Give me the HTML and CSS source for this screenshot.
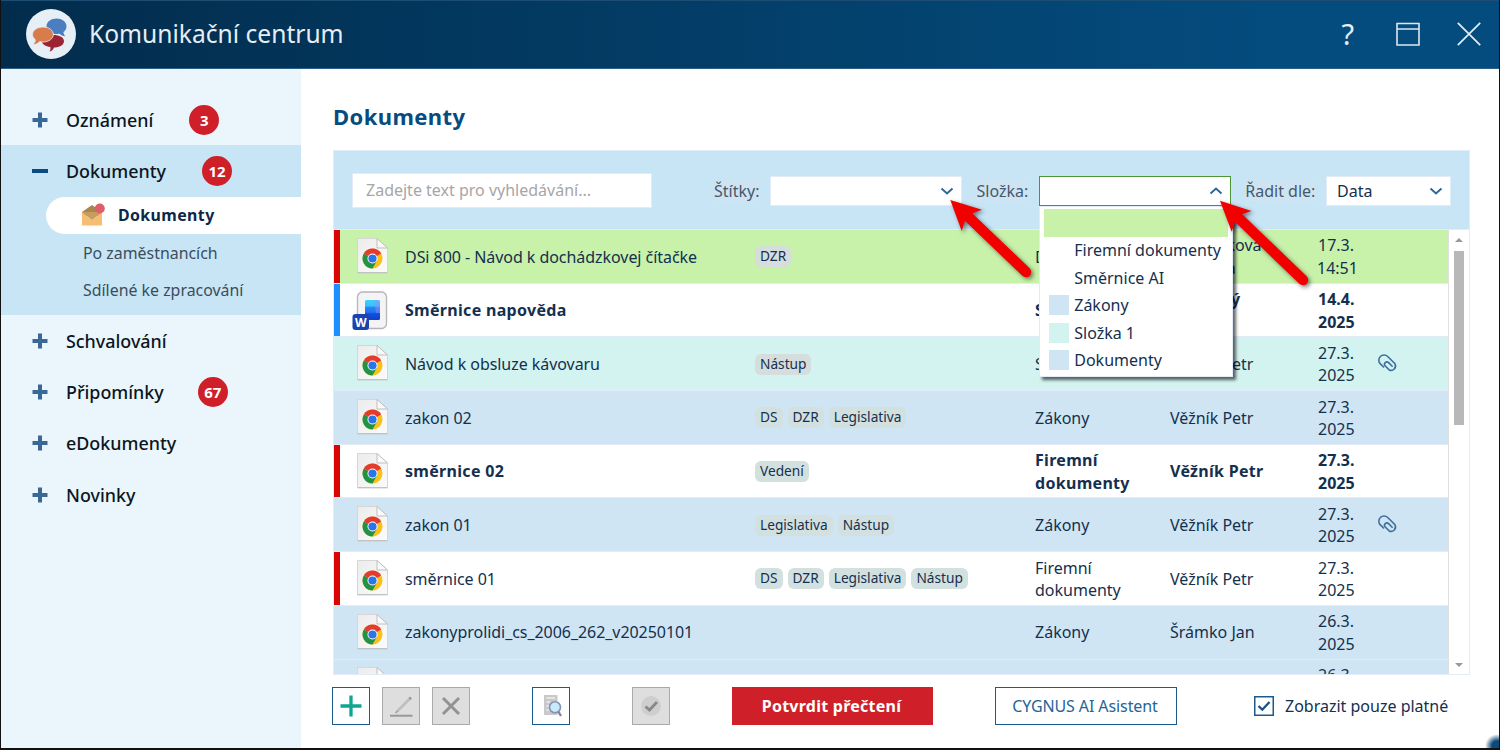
FILE: index.html
```html
<!DOCTYPE html>
<html lang="cs">
<head>
    <meta charset="UTF-8">
    <meta name="viewport" content="width=device-width, initial-scale=1.0">
    <title>Komunikační centrum</title>
    <link rel="stylesheet" href="styles.css">
</head>
<body>
    <!-- Shared icons -->
    <svg class="defs" width="0" height="0">
        <defs>
            <linearGradient id="paper" x1="0" y1="0" x2="1" y2="1">
                <stop offset="0" stop-color="#ececec"/>
                <stop offset="1" stop-color="#fbfbfb"/>
            </linearGradient>
            <linearGradient id="word" x1="0" y1="0" x2="0" y2="1">
                <stop offset="0" stop-color="#35d3fb"/>
                <stop offset="0.3" stop-color="#3cc0fa"/>
                <stop offset="0.36" stop-color="#2a86f5"/>
                <stop offset="0.62" stop-color="#1f6ff0"/>
                <stop offset="0.68" stop-color="#1450dc"/>
                <stop offset="1" stop-color="#0f3fd0"/>
            </linearGradient>
        </defs>
        <symbol id="chrome-doc" viewBox="0 0 33 37">
            <path d="M1.500 1.500H21L31.500 11V35.500H1.500z" fill="url(#paper)" stroke="#d6d6d6"/>
            <path d="M1.500 35.800H31.500" stroke="#b9b9b9"/>
            <path d="M21 1.500V11H31.500z" fill="#fafafa" stroke="#bfbfbf"/>
            <circle cx="16.500" cy="21.500" r="10" fill="#fbc116"/>
            <path d="M16.500 21.500L7.840 16.500A10 10 0 0 0 16.500 31.500L20.800 24z" fill="#229342"/>
            <path d="M16.500 21.500L7.840 16.500A10 10 0 0 1 25.160 16.500z" fill="#e33b2e"/>
            <circle cx="16.500" cy="21.500" r="5" fill="#fff"/>
            <circle cx="16.500" cy="21.500" r="4.100" fill="#2a76e8"/>
        </symbol>
        <symbol id="clip" viewBox="0 0 20 20">
            <g transform="rotate(-45 10 10)" fill="none" stroke="#3f6f9c" stroke-width="1.600" stroke-linecap="round">
                <path d="M4.700 9V4.500A5.200 5.200 0 0 1 15.100 4.500V14.800A4.500 4.500 0 0 1 6.600 15V9.500A2.400 2.400 0 0 1 11.400 9.500V14.500"/>
            </g>
        </symbol>
        <symbol id="plus" viewBox="0 0 16 16">
            <path d="M8 0.500V15.500M0.500 8H15.500" stroke="#3a6896" stroke-width="4"/>
        </symbol>
        <symbol id="chevron" viewBox="0 0 14 8">
            <path d="M1.500 1.500L7 6.500L12.500 1.500" fill="none" stroke="#2f689a" stroke-width="2"/>
        </symbol>
    </svg>

    <div class="window">
        <header class="titlebar">
            <svg class="logo" viewBox="0 0 50 50">
                <circle cx="25" cy="25" r="25" fill="#e6eff5"/>
                <path d="M30.500 9.500C36 9.500 40.500 12.800 40.500 17.200C40.500 19.500 39.300 21.600 37.400 23C37.600 24.800 38.300 26.200 39.400 27.300C36.800 27 34.900 26 33.700 24.700L30.500 25C25 25 20.500 21.600 20.500 17.200S25 9.500 30.500 9.500z" fill="#4b7ec0"/>
                <path d="M27.500 26C33.500 26 38 28.500 38 32.200C38 36 33.500 38.500 28 38.500C27.400 40.400 26 41.900 23.500 42.600C24.300 41.300 24.700 39.700 24.400 38C19.500 37.400 16 35.300 16 32.200C16 28.500 21 26 27.500 26z" fill="#9c2331"/>
                <path d="M17 18C22.800 18 27.300 21.200 27.300 25.500S22.800 33 17 33C15.800 33 14.800 32.900 13.700 32.600C12.200 34.300 10 35.600 6.800 35.900C8.300 34.400 9.200 32.700 9.300 30.700C7.500 29.400 6.500 27.500 6.500 25.500C6.500 21.200 11.200 18 17 18z" fill="#d87c4c" stroke="#e6eff5" stroke-width="0.800"/>
            </svg>
            <h1>Komunikační centrum</h1>
            <div class="window-buttons">
                <span class="help">?</span>
                <svg width="24" height="24" viewBox="0 0 24 24" fill="none" stroke="#dde8f0" stroke-width="1.600"><path d="M1 1.500H23V23H1zM1 7H23"/></svg>
                <svg width="24" height="24" viewBox="0 0 24 24" fill="none" stroke="#e4edf3" stroke-width="1.700"><path d="M0.800 0.800L23.200 23.200M23.200 0.800L0.800 23.200"/></svg>
            </div>
        </header>

        <div class="content">
            <nav class="sidebar">
                <div class="menu-item"><svg><use href="#plus"/></svg>Oznámení<span class="badge">3</span></div>
                <div class="menu-group">
                    <div class="menu-item"><svg viewBox="0 0 16 16"><path d="M0 8H16" stroke="#0d4a84" stroke-width="4"/></svg>Dokumenty<span class="badge">12</span></div>
                    <div class="submenu-item active">
                        <svg width="24" height="24" viewBox="0 0 24 24">
                            <path d="M1 9L11 2L21 9V13H1z" fill="#a98552"/>
                            <path d="M1 9V22.500H21V9L11 17z" fill="#f6be72"/>
                            <path d="M1 9H21L11 17z" fill="#c79c5c"/>
                            <circle cx="18.800" cy="5.500" r="5" fill="#df5f69"/>
                        </svg>
                        Dokumenty
                    </div>
                    <div class="submenu-item">Po zaměstnancích</div>
                    <div class="submenu-item">Sdílené ke zpracování</div>
                </div>
                <div class="menu-item"><svg><use href="#plus"/></svg>Schvalování</div>
                <div class="menu-item"><svg><use href="#plus"/></svg>Připomínky<span class="badge narrow">67</span></div>
                <div class="menu-item"><svg><use href="#plus"/></svg>eDokumenty</div>
                <div class="menu-item"><svg><use href="#plus"/></svg>Novinky</div>
            </nav>

            <main class="main">
                <h2>Dokumenty</h2>
                <section class="panel">
                    <div class="filters">
                        <input class="search" type="text" placeholder="Zadejte text pro vyhledávání...">
                        <label>Štítky:</label>
                        <div class="select tags-select"><svg><use href="#chevron"/></svg></div>
                        <label>Složka:</label>
                        <div class="select folder-select open">
                            <svg><use href="#chevron"/></svg>
                            <ul class="dropdown">
                                <li class="selected"></li>
                                <li><i class="swatch"></i>Firemní dokumenty</li>
                                <li><i class="swatch"></i>Směrnice AI</li>
                                <li><i class="swatch blue"></i>Zákony</li>
                                <li><i class="swatch mint"></i>Složka 1</li>
                                <li><i class="swatch blue"></i>Dokumenty</li>
                            </ul>
                        </div>
                        <label>Řadit dle:</label>
                        <div class="select sort-select">Data<svg><use href="#chevron"/></svg></div>
                    </div>

                    <div class="list">
                        <div class="rows">
                            <div class="row green mark-red">
                                <svg class="file"><use href="#chrome-doc"/></svg>
                                <div>DSi 800 - Návod k dochádzkovej čítačke</div>
                                <div class="tags"><span class="gray">DZR</span></div>
                                <div>Dokumenty</div>
                                <div>Matoušková Veronika</div>
                                <div>17.3.<br><span class="time">14:51</span></div>
                                <div></div>
                            </div>
                            <div class="row bold mark-blue">
                                <svg class="file word" viewBox="0 0 36 39">
                                    <rect x="5.500" y="1" width="29" height="36.500" rx="5" fill="#f4f4f6" stroke="#b5b5b8" stroke-width="1.300"/>
                                    <rect x="13" y="9" width="15" height="20" rx="1.500" fill="url(#word)"/>
                                    <path d="M22 9H26.500Q28 9 28 10.500V22H24z" fill="#9b8cf8" opacity="0.450"/>
                                    <rect x="0.500" y="23" width="16.500" height="16" rx="3" fill="#1a43b0"/>
                                    <text x="8.700" y="35.500" text-anchor="middle" class="word-letter">W</text>
                                </svg>
                                <div>Směrnice napověda</div>
                                <div class="tags"></div>
                                <div>Směrnice AI</div>
                                <div>Novotný<br>Jan</div>
                                <div>14.4. 2025</div>
                                <div></div>
                            </div>
                            <div class="row mint">
                                <svg class="file"><use href="#chrome-doc"/></svg>
                                <div>Návod k obsluze kávovaru</div>
                                <div class="tags"><span class="gray">Nástup</span></div>
                                <div>Složka 1</div>
                                <div>Věžník Petr</div>
                                <div>27.3. 2025</div>
                                <div><svg class="clip"><use href="#clip"/></svg></div>
                            </div>
                            <div class="row blue">
                                <svg class="file"><use href="#chrome-doc"/></svg>
                                <div>zakon 02</div>
                                <div class="tags"><span>DS</span><span>DZR</span><span>Legislativa</span></div>
                                <div>Zákony</div>
                                <div>Věžník Petr</div>
                                <div>27.3. 2025</div>
                                <div></div>
                            </div>
                            <div class="row bold mark-red">
                                <svg class="file"><use href="#chrome-doc"/></svg>
                                <div>směrnice 02</div>
                                <div class="tags"><span>Vedení</span></div>
                                <div>Firemní dokumenty</div>
                                <div>Věžník Petr</div>
                                <div>27.3. 2025</div>
                                <div></div>
                            </div>
                            <div class="row blue">
                                <svg class="file"><use href="#chrome-doc"/></svg>
                                <div>zakon 01</div>
                                <div class="tags"><span>Legislativa</span><span>Nástup</span></div>
                                <div>Zákony</div>
                                <div>Věžník Petr</div>
                                <div>27.3. 2025</div>
                                <div><svg class="clip"><use href="#clip"/></svg></div>
                            </div>
                            <div class="row mark-red">
                                <svg class="file"><use href="#chrome-doc"/></svg>
                                <div>směrnice 01</div>
                                <div class="tags"><span>DS</span><span>DZR</span><span>Legislativa</span><span>Nástup</span></div>
                                <div>Firemní dokumenty</div>
                                <div>Věžník Petr</div>
                                <div>27.3. 2025</div>
                                <div></div>
                            </div>
                            <div class="row blue">
                                <svg class="file"><use href="#chrome-doc"/></svg>
                                <div>zakonyprolidi_cs_2006_262_v20250101</div>
                                <div class="tags"></div>
                                <div>Zákony</div>
                                <div>Šrámko Jan</div>
                                <div>26.3. 2025</div>
                                <div></div>
                            </div>
                            <div class="row blue">
                                <svg class="file"><use href="#chrome-doc"/></svg>
                                <div></div>
                                <div class="tags"></div>
                                <div></div>
                                <div></div>
                                <div>26.3. 2025</div>
                                <div></div>
                            </div>
                        </div>
                        <div class="scrollbar">
                            <i class="arrow-up"></i>
                            <i class="thumb"></i>
                            <i class="arrow-down"></i>
                        </div>
                    </div>
                </section>

                <div class="toolbar">
                    <button class="icon-button"><svg viewBox="0 0 36 36"><path d="M18 7.500V28.500M7.500 18H28.500" stroke="#0fa68f" stroke-width="3.300"/></svg></button>
                    <button class="icon-button disabled"><svg viewBox="0 0 36 36"><path d="M7 27.700H29.500" stroke="#999" stroke-width="2"/><path d="M14 23.500L27.500 10" stroke="#bfbfbf" stroke-width="2.600"/><path d="M12.500 25L14.500 23" stroke="#999" stroke-width="1.500"/><path d="M26.500 11L28 9.500" stroke="#999" stroke-width="2.600"/></svg></button>
                    <button class="icon-button disabled"><svg viewBox="0 0 36 36"><path d="M10 10L26 26M26 10L10 26" stroke="#929292" stroke-width="3"/></svg></button>
                    <button class="icon-button preview"><svg viewBox="0 0 36 36"><path d="M11 7H24.500V27H11z" fill="#c9c9c9"/><path d="M13.500 10H22M13.500 14H17M13.500 18H16M13.500 22H17" stroke="#eee" stroke-width="1.500"/><circle cx="22" cy="19.300" r="5.500" fill="#c8eafa" stroke="#8295b5" stroke-width="1.600"/><path d="M25.500 23.800L28 28" stroke="#8a7f96" stroke-width="2.300"/></svg></button>
                    <button class="icon-button disabled confirm"><svg viewBox="0 0 36 36"><circle cx="18" cy="18" r="10" fill="#cecece"/><path d="M12.500 18.500L16.500 22L24 14" fill="none" stroke="#888" stroke-width="2.800"/></svg></button>
                    <button class="read-button">Potvrdit přečtení</button>
                    <button class="ai-button">CYGNUS AI Asistent</button>
                    <label class="valid-only">
                        <svg width="20" height="20" viewBox="0 0 20 20"><path d="M0.750 0.750H19.250V19.250H0.750z" fill="#fff" stroke="#1c5a8c" stroke-width="1.500"/><path d="M4.500 10L8.300 13.700L15.500 6" fill="none" stroke="#174f85" stroke-width="2.300"/></svg>
                        Zobrazit pouze platné
                    </label>
                </div>
            </main>
        </div>
        <i class="resize-corner"></i>
    </div>

    <!-- Pointers to the two filters -->
    <svg class="pointers" viewBox="0 0 1500 750">
        <g fill="#f20000" stroke="#f20000">
            <path d="M950.300 200L982 209.700L973.300 213L965 221L961.700 231z" stroke="none"/>
            <path d="M968 216.500L1026 272" stroke-width="10.500" stroke-linecap="round"/>
            <path d="M1220 200.700L1251.500 211L1242.500 214L1235 221.500L1231.700 231.700z" stroke="none"/>
            <path d="M1238 217.500L1303 280" stroke-width="10.500" stroke-linecap="round"/>
        </g>
    </svg>
</body>
</html>
```
FILE: styles.css
```css
* {
    box-sizing: border-box;
}
body {
    margin: 0;
    font-family: "Noto Sans", sans-serif;
    font-size: 16px;
    color: #14304e;
    overflow: hidden;
}
h1, h2, ul {
    margin: 0;
    padding: 0;
}
.defs {
    position: absolute;
}
.window {
    position: relative;
    width: 1500px;
    height: 750px;
    display: flex;
    flex-direction: column;
    background-color: #fff;
    border: 1px solid #111;
    border-top: none;
    border-bottom-width: 2px;
    overflow: hidden;
}

/* Title bar */
.titlebar {
    height: 69px;
    margin: 0 -1px;
    padding: 0 19px 2px 26px;
    display: flex;
    align-items: center;
    flex-shrink: 0;
    background: linear-gradient(to right, #022c4c, #044c7e 85%);
    border-top: 1px solid #1d4d72;
    border-bottom: 1px solid #2b5f87;
}
.logo {
    width: 50px;
    height: 50px;
    margin-right: 13px;
}
.titlebar h1 {
    font-size: 24.600px;
    font-weight: 400;
    color: #e6eef4;
}
.window-buttons {
    margin-left: auto;
    display: flex;
    align-items: center;
    gap: 37px;
}
.help {
    margin-right: 5px;
    font-size: 29px;
    line-height: 30px;
    color: #e6eef4;
}

/* Sidebar */
.content {
    display: flex;
    flex: 1;
}
.sidebar {
    width: 300px;
    padding-top: 25px;
    background-color: #eaf5fc;
}
.menu-item {
    height: 51.250px;
    padding-left: 31px;
    display: flex;
    align-items: center;
    font-size: 17.900px;
    font-weight: 500;
    color: #0c1520;
}
.menu-item svg {
    width: 16px;
    height: 16px;
    margin-right: 18px;
}
.badge {
    width: 30px;
    height: 30px;
    margin-left: 36px;
    border-radius: 50%;
    background-color: #cf1f28;
    color: #fff;
    font-size: 15px;
    font-weight: 700;
    line-height: 30px;
    text-align: center;
}
.badge.narrow {
    margin-left: 34px;
}
.menu-group {
    height: 170px;
    background-color: #c7e5f5;
}
.submenu-item {
    height: 37.500px;
    padding-left: 82px;
    display: flex;
    align-items: center;
    font-size: 15.900px;
    color: #3b4d5c;
}
.submenu-item.active {
    margin-left: 45px;
    padding-left: 35px;
    border-radius: 19px 0 0 19px;
    background-color: #fff;
    font-weight: 700;
    letter-spacing: 0.400px;
    color: #0c2748;
}
.submenu-item svg {
    margin-right: 13px;
}

/* Main area */
.main {
    flex: 1;
    padding: 32px 29px 0 32px;
}
h2 {
    height: 49px;
    font-size: 22px;
    line-height: 30px;
    letter-spacing: 0.400px;
    color: #064c7f;
}
.panel {
    width: 1137px;
    height: 525px;
    border: 1px solid #e3ebf8;
}
.filters {
    height: 79px;
    padding: 0 18px;
    display: flex;
    align-items: center;
    background-color: #c7e5f5;
    border-bottom: 1px solid #e3ebf8;
}
.search {
    width: 300px;
    height: 35px;
    margin: 0 62px 0 0;
    padding: 0 13px;
    border: 1px solid #e3ebf8;
    font-family: inherit;
    font-size: 16px;
}
.search::placeholder {
    color: #a6a6a6;
}
.filters label {
    margin-top: 2px;
    color: #45586c;
    background-color: #cfe4f3;
}
.select {
    position: relative;
    height: 30px;
    margin-top: 2px;
    padding: 0 7px 0 10px;
    display: flex;
    align-items: center;
    background-color: #fff;
    border: 1px solid #e3ebf8;
    color: #14304e;
}
.select > svg {
    width: 14px;
    height: 8px;
    margin-left: auto;
}
.tags-select {
    width: 192px;
    margin-left: 11px;
    margin-right: 14px;
}
.folder-select {
    width: 192px;
    margin-left: 11px;
    margin-right: 14px;
}
.sort-select {
    width: 125px;
    margin-left: auto;
}
.open {
    border: 1px solid #4f9436;
}
.open > svg {
    transform: rotate(180deg);
}
.dropdown {
    position: absolute;
    top: 29px;
    left: -1px;
    z-index: 2;
    width: 194px;
    height: 171px;
    padding: 2px 4px;
    background-color: #fff;
    border: 1px solid #e3ebf8;
    box-shadow: 3px 3px 3px rgba(0, 0, 0, 0.6);
    list-style: none;
    white-space: nowrap;
}
.dropdown li {
    height: 27.500px;
    padding-left: 5px;
    display: flex;
    align-items: center;
}
.dropdown .selected {
    background-color: #c8f1a9;
}
.swatch {
    width: 20px;
    height: 20px;
    margin-right: 5px;
}
.swatch.blue {
    background-color: #cfe5f4;
}
.swatch.mint {
    background-color: #d2f3f0;
}

/* Document list */
.list {
    height: 444px;
    display: flex;
}
.rows {
    width: 1114px;
    overflow: hidden;
}
.row {
    height: 53.700px;
    display: grid;
    grid-template-columns: 48px 350px 280px 135px 148px 60px 1fr;
    align-items: center;
    padding: 1px 0 0 23px;
    border-bottom: 1px solid #e3ebf8;
    line-height: 22.400px;
}
.row > div:nth-child(2) {
    letter-spacing: -0.050px;
}
.row > div:nth-child(5) {
    width: 100px;
}
.row > div:nth-child(6) {
    width: 44px;
}
.green {
    background-color: #c8f1a9;
}
.row.mint {
    background-color: #d2f3f0;
}
.row.blue {
    background-color: #cfe5f4;
}
.mark-red {
    box-shadow: inset 6px 0 #d90404;
}
.mark-blue {
    box-shadow: inset 6px 0 #1f8fff;
}
.row.bold > div {
    font-weight: 700;
    letter-spacing: 0.300px;
}
.row.bold > div:nth-child(6), .row.bold > .tags {
    letter-spacing: 0;
}
.file {
    width: 33px;
    height: 37px;
    margin: -3px 0 0 -1px;
}
.file.word {
    width: 36px;
    height: 39px;
    margin-top: -1px;
    margin-left: -5px;
}
.word-letter {
    font-size: 12px;
    font-weight: 700;
    fill: #fff;
}
.time {
    margin-left: -1px;
}
.tags {
    display: flex;
    gap: 5px;
}
.tags span {
    height: 21px;
    padding: 0 5px;
    border-radius: 6px;
    background-color: #d3e0e0;
    font-size: 13.700px;
    font-weight: 400;
    line-height: 20px;
}
.tags .gray {
    background-color: #d5dddd;
}
.clip {
    display: block;
    width: 20px;
    height: 20px;
}
.scrollbar {
    flex: 1;
    display: flex;
    flex-direction: column;
    align-items: center;
    border-left: 1px solid #e0e0e0;
    padding: 8px 0 7px;
}
.arrow-up {
    border: 4px solid transparent;
    border-top: none;
    border-bottom-color: #999;
}
.thumb {
    width: 10px;
    height: 174px;
    margin-top: 9px;
    background-color: #b8b8b8;
}
.arrow-down {
    margin-top: auto;
    border: 4px solid transparent;
    border-bottom: none;
    border-top-color: #999;
}

/* Bottom buttons */
.toolbar {
    display: flex;
    align-items: center;
    margin-top: 12px;
}
button {
    height: 38px;
    padding: 0;
    font-family: inherit;
    font-size: 16px;
}
.icon-button {
    width: 38px;
    margin-right: 12px;
    background-color: #fff;
    border: 1px solid #1c5a8c;
}
.icon-button:first-child {
    margin-left: -1px;
}
.icon-button svg {
    display: block;
    width: 36px;
    height: 36px;
}
.disabled {
    background-color: #dedede;
    border-color: #a9a9a9;
}
.preview {
    margin-left: 50px;
}
.confirm {
    margin-left: 50px;
}
.read-button {
    width: 201px;
    margin-left: 50px;
    padding-right: 2px;
    border: none;
    background-color: #cf1f28;
    color: #fff;
    font-weight: 700;
    letter-spacing: 0.250px;
}
.ai-button {
    width: 182px;
    margin-left: 62px;
    padding-right: 2px;
    border: 1px solid #1c5a8c;
    background-color: #fff;
    color: #256498;
    letter-spacing: -0.100px;
}
.valid-only {
    margin-left: 77px;
    display: flex;
    align-items: center;
    gap: 11px;
    white-space: nowrap;
}
.resize-corner {
    position: absolute;
    right: -10px;
    bottom: -10px;
    width: 24px;
    height: 24px;
    border-radius: 50%;
    background: radial-gradient(circle, #0d4a7a 30%, rgba(13, 74, 122, 0) 70%);
}
.pointers {
    position: absolute;
    top: 0;
    left: 0;
    width: 1500px;
    height: 750px;
    z-index: 5;
    pointer-events: none;
    filter: drop-shadow(2px 2px 2px rgba(0, 0, 0, 0.5));
}
```
